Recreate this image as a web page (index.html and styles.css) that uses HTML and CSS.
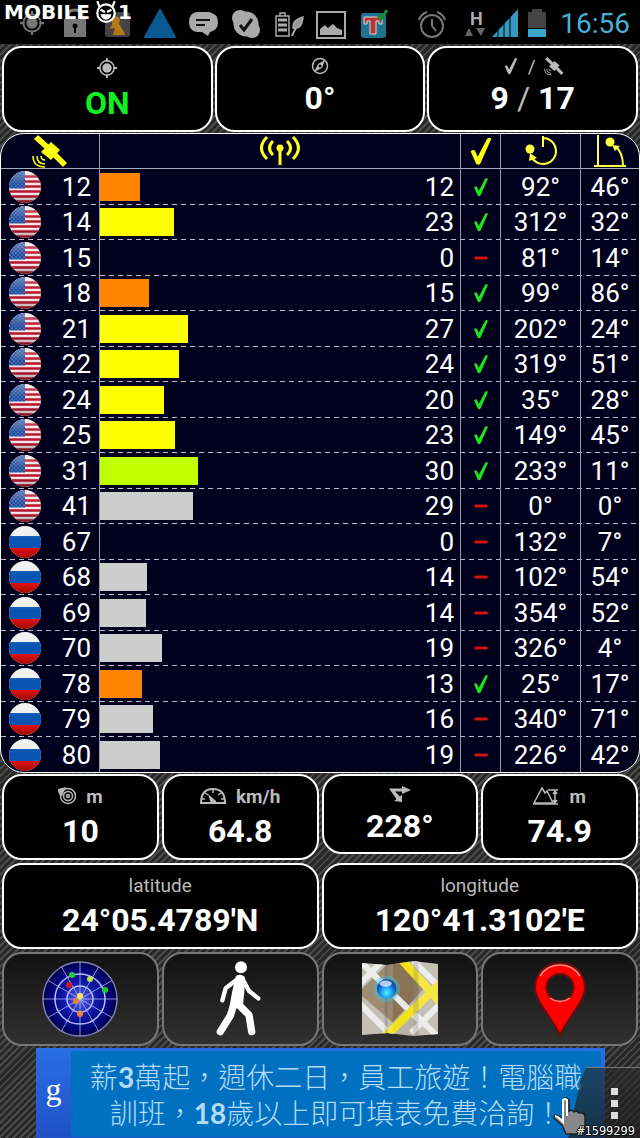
FILE: index.html
```html
<!DOCTYPE html>
<html lang="zh-Hant">
<head>
  <meta charset="UTF-8">
  <meta name="viewport" content="width=device-width, initial-scale=1.0">
  <title>GPS Status</title>
  <link rel="stylesheet" href="styles.css">
</head>
<body>

  <!-- Shared icons -->
  <svg class="defs" width="0" height="0" aria-hidden="true">
    <defs>
      <radialGradient id="radarFill">
        <stop offset="0" stop-color="#5a6cf0"/><stop offset="0.45" stop-color="#1018a8"/><stop offset="0.85" stop-color="#000070"/><stop offset="1" stop-color="#00003c"/>
      </radialGradient>
      <radialGradient id="ballFill" cx="0.5" cy="0.7">
        <stop offset="0" stop-color="#4ff0ff"/><stop offset="0.6" stop-color="#189cf0"/><stop offset="1" stop-color="#0a50b8"/>
      </radialGradient>
      <linearGradient id="shine" x1="0" y1="0" x2="0" y2="1">
        <stop offset="0" stop-color="#fff" stop-opacity="0.3"/><stop offset="0.4" stop-color="#fff" stop-opacity="0"/><stop offset="0.7" stop-color="#000" stop-opacity="0"/><stop offset="1" stop-color="#000" stop-opacity="0.3"/>
      </linearGradient>
      <clipPath id="round"><circle cx="16" cy="16" r="16"/></clipPath>
      <clipPath id="mapShape"><path d="M0 2 25 4 50 0 74 3V71L50 73 25 70 0 72z"/></clipPath>
      <pattern id="stars" width="4" height="4" patternUnits="userSpaceOnUse">
        <rect width="4" height="4" fill="#1d4a9c"/><circle cx="1" cy="1" r="0.6" fill="#cfe0f8"/><circle cx="3" cy="3" r="0.6" fill="#cfe0f8"/>
      </pattern>
    </defs>
    <symbol id="us" viewBox="0 0 32 32">
      <g clip-path="url(#round)">
        <rect width="32" height="32" fill="#f8e6e8"/>
        <path d="M0 5.500h32M0 10.500h32M0 15.500h32M0 20.500h32M0 25.500h32M0 30.500h32" stroke="#b5162c" stroke-width="2.500"/>
        <rect width="16" height="17.500" fill="url(#stars)"/>
        <rect width="32" height="32" fill="url(#shine)"/>
      </g>
    </symbol>
    <symbol id="ru" viewBox="0 0 32 32">
      <g clip-path="url(#round)">
        <rect width="32" height="32" fill="#eee"/>
        <rect y="10" width="32" height="12" fill="#0a55b4"/>
        <rect y="22" width="32" height="10" fill="#e0100c"/>
        <rect width="32" height="32" fill="url(#shine)"/>
      </g>
    </symbol>
    <symbol id="tick" viewBox="0 0 24 32">
      <path d="M1 16.500Q3 14 5.500 15.500L8.500 22 18.500 3Q21 .5 23 3L11.500 29Q9 32.500 6.500 29z" fill="currentColor"/>
    </symbol>
    <symbol id="minus" viewBox="0 0 24 32"><path d="M3.500 16h17" stroke="#d01414" stroke-width="5" stroke-linecap="round"/></symbol>
    <symbol id="satellite" viewBox="0 0 36 34">
      <g fill="currentColor">
        <path d="M6 1 17 11 13 15 2 5z"/><path d="M19 8 28 16 19 26 9 18z"/><path d="M25 19 35 29 31 33 21 23z"/>
      </g>
      <path d="M9 22q0 4 4 4M5 22q0 8 8 8M1 22q0 11 12 11" fill="none" stroke="currentColor" stroke-width="1.500"/>
    </symbol>
    <symbol id="target" viewBox="0 0 32 32">
      <circle cx="16" cy="16" r="7.500" fill="currentColor"/>
      <circle cx="16" cy="16" r="11.500" fill="none" stroke="currentColor" stroke-width="2.400"/>
      <path d="M16 0v6M16 26v6M0 16h6M26 16h6" stroke="currentColor" stroke-width="3"/>
    </symbol>
  </svg>

  <header class="status-bar">
    <div class="notifications">
      <svg viewBox="0 0 32 32"><g color="#777" transform="translate(4 4) scale(.75)"><use href="#target" width="32" height="32"/></g></svg>
      <svg viewBox="0 0 32 32" fill="#777"><path d="M5 12h22v18H5z"/><path d="M9 12V8q0-5 7-5t7 5v4" fill="none" stroke="#777" stroke-width="3"/><circle cx="16" cy="19" r="2.500" fill="#000"/><path d="M15 20h2v6h-2z" fill="#000"/></svg>
      <svg viewBox="0 0 32 32"><rect x="3" y="5" width="25" height="25" rx="3" fill="#444"/><path d="M10 10q5-3 8 2l-1 5 5 8 1 3H11l2-7-5 1 2-4z" fill="#b57a18"/></svg>
      <svg viewBox="0 0 32 32"><path d="M16 3 31 30H1z" fill="#0a5a92" stroke="#0a5a92" stroke-width="2" stroke-linejoin="round"/></svg>
      <svg viewBox="0 0 32 32"><path d="M10 5h12q9 2 9 10t-8 10l-2 4-6-4h-5q-8-1-8-10T10 5z" fill="#aaa"/><path d="M9 13h14M9 18h9" stroke="#111" stroke-width="2"/></svg>
      <svg viewBox="0 0 32 32"><circle cx="16" cy="17" r="12.500" fill="#aaa"/><circle cx="10" cy="11" r="8" fill="#aaa"/><circle cx="22" cy="23" r="8" fill="#aaa"/><path d="M10 18l4 5 8-11" fill="none" stroke="#111" stroke-width="3"/></svg>
      <svg viewBox="0 0 32 32" fill="none" stroke="#aaa" stroke-width="1.500"><path d="M3 9h13v20H3zM7 6h5v3H7z"/><path d="M5 13h9M5 18h9M5 23h9" stroke-width="3"/><path d="M19 29q2-5 4-8" stroke-width="2"/><path d="M20 21q-1-8 10-11-1 13-10 11z" fill="#999"/></svg>
      <svg viewBox="0 0 32 32"><path d="M2 5h28v26H2z" fill="none" stroke="#aaa" stroke-width="2"/><path d="M5 28v-6l5-4 3 3 5-4 4 4 5 2v5z" fill="#aaa"/></svg>
      <svg viewBox="0 0 32 32"><rect x="3" y="6" width="25" height="25" rx="3" fill="#1f7290"/><path d="M6 10h18v7h-3v-3h-3v13h-6V14H9v3H6z" fill="#b33" stroke="#ddd"/><path d="M20 8l3 4 6-9" fill="none" stroke="#1a8a2a" stroke-width="3"/></svg>
    </div>
    <svg class="alarm" viewBox="0 0 32 32" fill="none" stroke="#777" stroke-width="2"><circle cx="16" cy="19" r="11"/><path d="M16 12v7l4 5M3 13q2-6 8-8M29 13q-2-6-8-8"/></svg>
    <div class="network"><b>H</b><svg viewBox="0 0 22 9" fill="#666"><path d="M1 8 5 0 9 8zM12 0h9l-4 8z"/></svg></div>
    <svg class="signal" viewBox="0 0 26 28"><path d="M0 28 26 0v28z" fill="#359ac0"/><path d="M6 18v10M12 10v18M18 4v24" stroke="#000"/></svg>
    <svg class="battery" viewBox="0 0 18 28"><path d="M0 3h4V0h10v3h4v16H0z" fill="#444"/><path d="M0 20h18v8H0z" fill="#38a5cc"/></svg>
    <time class="clock">16:56</time>
    <div class="watermark">MOBILE<svg viewBox="0 0 20 22"><circle cx="10" cy="12" r="8" fill="#000" stroke="#fff" stroke-width="2"/><path d="M2 1l2 5M18 1l-2 5M5 9l4 2M15 9l-4 2" stroke="#fff" stroke-width="2"/><path d="M5 13h10q-1 5-5 5t-5-5z" fill="#fff"/></svg>1</div>
  </header>

  <main>
    <section class="row top">
      <div class="card">
        <div class="label"><svg class="ic20"><use href="#target"/></svg></div>
        <div class="value on">ON</div>
      </div>
      <div class="card compact">
        <div class="label"><svg class="ic18" viewBox="0 0 18 18"><circle cx="9" cy="9" r="7.500" fill="none" stroke="#bbb" stroke-width="1.500"/><path d="M14 3 11 11 3 15 7 7z" fill="#bbb"/><circle cx="9" cy="9" r="1.500" fill="#000"/></svg></div>
        <div class="value">0°</div>
      </div>
      <div class="card compact">
        <div class="label icons"><svg class="ic18"><use href="#tick"/></svg><span class="slash">/</span><svg class="ic20"><use href="#satellite"/></svg></div>
        <div class="value">9 <span class="slash">/</span> 17</div>
      </div>
    </section>

    <section class="panel">
      <table class="sats">
        <thead>
          <tr>
            <th class="id" aria-label="Satellite"><svg class="h-sat"><use href="#satellite"/></svg></th>
            <th aria-label="Signal"><svg class="h-signal" viewBox="0 0 42 30" fill="none" stroke="#ff2" stroke-width="3"><circle cx="21" cy="12" r="3.500" fill="#ff2" stroke="none"/><path d="M21 15v14M14 5q-7 7 0 14M28 5q7 7 0 14M8 1q-11 11 0 22M34 1q11 11 0 22"/></svg></th>
            <th class="used" aria-label="Used"><svg class="h-tick"><use href="#tick"/></svg></th>
            <th class="az" aria-label="Azimuth"><svg class="h-az" viewBox="0 0 34 32" fill="none" stroke="#ff4" stroke-width="2"><path d="M19 1v11M19 3A13 13 0 1 1 7 21"/><circle cx="6" cy="14" r="4.500" fill="#ff4" stroke="none"/><path d="M5 26l1-8 7 5z" fill="#ff4" stroke="none"/></svg></th>
            <th class="el" aria-label="Elevation"><svg class="h-el" viewBox="0 0 34 32" fill="none" stroke="#ff4" stroke-width="2"><path d="M5 0v31M1 31h32M30 31Q30 17 22 11"/><circle cx="17" cy="7" r="4.500" fill="#ff4" stroke="none"/><path d="M19 10l8 1-5 5z" fill="#ff4" stroke="none"/></svg></th>
          </tr>
        </thead>
        <tbody>
          <tr><td><div class="sat"><svg><use href="#us"/></svg>12</div></td><td><div class="snr"><i class="bar orange" style="width: 11.3%"></i>12</div></td><td><svg class="mark"><use href="#tick"/></svg></td><td>92°</td><td>46°</td></tr>
          <tr><td><div class="sat"><svg><use href="#us"/></svg>14</div></td><td><div class="snr"><i class="bar yellow" style="width: 20.9%"></i>23</div></td><td><svg class="mark"><use href="#tick"/></svg></td><td>312°</td><td>32°</td></tr>
          <tr><td><div class="sat"><svg><use href="#us"/></svg>15</div></td><td><div class="snr"><i class="bar" style="width: 0%"></i>0</div></td><td><svg class="mark"><use href="#minus"/></svg></td><td>81°</td><td>14°</td></tr>
          <tr><td><div class="sat"><svg><use href="#us"/></svg>18</div></td><td><div class="snr"><i class="bar orange" style="width: 13.8%"></i>15</div></td><td><svg class="mark"><use href="#tick"/></svg></td><td>99°</td><td>86°</td></tr>
          <tr><td><div class="sat"><svg><use href="#us"/></svg>21</div></td><td><div class="snr"><i class="bar yellow" style="width: 24.9%"></i>27</div></td><td><svg class="mark"><use href="#tick"/></svg></td><td>202°</td><td>24°</td></tr>
          <tr><td><div class="sat"><svg><use href="#us"/></svg>22</div></td><td><div class="snr"><i class="bar yellow" style="width: 22.3%"></i>24</div></td><td><svg class="mark"><use href="#tick"/></svg></td><td>319°</td><td>51°</td></tr>
          <tr><td><div class="sat"><svg><use href="#us"/></svg>24</div></td><td><div class="snr"><i class="bar yellow" style="width: 18.1%"></i>20</div></td><td><svg class="mark"><use href="#tick"/></svg></td><td>35°</td><td>28°</td></tr>
          <tr><td><div class="sat"><svg><use href="#us"/></svg>25</div></td><td><div class="snr"><i class="bar yellow" style="width: 21.2%"></i>23</div></td><td><svg class="mark"><use href="#tick"/></svg></td><td>149°</td><td>45°</td></tr>
          <tr><td><div class="sat"><svg><use href="#us"/></svg>31</div></td><td><div class="snr"><i class="bar green" style="width: 27.8%"></i>30</div></td><td><svg class="mark"><use href="#tick"/></svg></td><td>233°</td><td>11°</td></tr>
          <tr><td><div class="sat"><svg><use href="#us"/></svg>41</div></td><td><div class="snr"><i class="bar gray" style="width: 26.4%"></i>29</div></td><td><svg class="mark"><use href="#minus"/></svg></td><td>0°</td><td>0°</td></tr>
          <tr><td><div class="sat"><svg><use href="#ru"/></svg>67</div></td><td><div class="snr"><i class="bar" style="width: 0%"></i>0</div></td><td><svg class="mark"><use href="#minus"/></svg></td><td>132°</td><td>7°</td></tr>
          <tr><td><div class="sat"><svg><use href="#ru"/></svg>68</div></td><td><div class="snr"><i class="bar gray" style="width: 13.3%"></i>14</div></td><td><svg class="mark"><use href="#minus"/></svg></td><td>102°</td><td>54°</td></tr>
          <tr><td><div class="sat"><svg><use href="#ru"/></svg>69</div></td><td><div class="snr"><i class="bar gray" style="width: 13%"></i>14</div></td><td><svg class="mark"><use href="#minus"/></svg></td><td>354°</td><td>52°</td></tr>
          <tr><td><div class="sat"><svg><use href="#ru"/></svg>70</div></td><td><div class="snr"><i class="bar gray" style="width: 17.5%"></i>19</div></td><td><svg class="mark"><use href="#minus"/></svg></td><td>326°</td><td>4°</td></tr>
          <tr><td><div class="sat"><svg><use href="#ru"/></svg>78</div></td><td><div class="snr"><i class="bar orange" style="width: 12%"></i>13</div></td><td><svg class="mark"><use href="#tick"/></svg></td><td>25°</td><td>17°</td></tr>
          <tr><td><div class="sat"><svg><use href="#ru"/></svg>79</div></td><td><div class="snr"><i class="bar gray" style="width: 15%"></i>16</div></td><td><svg class="mark"><use href="#minus"/></svg></td><td>340°</td><td>71°</td></tr>
          <tr><td><div class="sat"><svg><use href="#ru"/></svg>80</div></td><td><div class="snr"><i class="bar gray" style="width: 17%"></i>19</div></td><td><svg class="mark"><use href="#minus"/></svg></td><td>226°</td><td>42°</td></tr>
        </tbody>
      </table>
    </section>

    <section class="row">
      <div class="card">
        <div class="label"><svg class="ic18" viewBox="0 0 18 18" fill="none" stroke="#bbb" stroke-width="1.500"><circle cx="10" cy="9" r="7.500"/><circle cx="10" cy="9" r="4.500"/><circle cx="10" cy="9" r="1.500"/><path d="M0 2 8 0 4 9Q0 8 0 2z" fill="#bbb" stroke="none"/></svg>m</div>
        <div class="value">10</div>
      </div>
      <div class="card">
        <div class="label"><svg class="ic26" viewBox="0 0 26 18" fill="none" stroke="#bbb" stroke-width="2"><path d="M1 16Q1 2 13 2t12 14z"/><path d="M13 2v4M5 6l3 2M21 6l-3 2M2 12h3M24 12h-3" stroke-width="1.500"/><path d="M8 7l8 7v3h-5z" fill="#bbb" stroke="none"/></svg>km/h</div>
        <div class="value">64.8</div>
      </div>
      <div class="card compact">
        <div class="label"><svg class="ic22" viewBox="0 0 22 16"><path d="M0 2.500h13V0l9 4-9 4V5.500H6l5 5 2-2V16l-8-1 2.500-2z" fill="#bbb"/></svg></div>
        <div class="value">228°</div>
      </div>
      <div class="card">
        <div class="label"><svg class="ic26" viewBox="0 0 26 18" fill="none" stroke="#bbb" stroke-width="1.500"><path d="M1 16 9 1 12 6 14 4 20 16z"/><path d="M0 17h25M15 3h10M22 4v12M20 7l2-3 2 3M20 13l2 3 2-3"/></svg>m</div>
        <div class="value">74.9</div>
      </div>
    </section>

    <section class="row">
      <div class="card">
        <div class="label name">latitude</div>
        <div class="value">24°05.4789'N</div>
      </div>
      <div class="card">
        <div class="label name">longitude</div>
        <div class="value">120°41.3102'E</div>
      </div>
    </section>

    <nav class="row buttons">
      <button type="button" aria-label="Radar">
        <svg viewBox="0 0 76 76" fill="none" stroke="#b8bcf4">
          <circle cx="38" cy="38" r="37" fill="url(#radarFill)" stroke="#777db8" stroke-width="1.500"/>
          <path d="M38 1v74M1 38h74M19.500 6l37 64M56.500 6l-37 64M6 19.500l64 37M6 56.500l64-37" stroke-opacity=".75"/>
          <circle cx="38" cy="38" r="25" stroke-width="1.500"/><circle cx="38" cy="38" r="13" stroke-width="1.500"/>
          <g stroke="none"><circle cx="30" cy="14" r="3" fill="#1bd030"/><circle cx="48" cy="18" r="3" fill="#b4e84a"/><circle cx="63" cy="29" r="3" fill="#1bd030"/><circle cx="27" cy="24" r="3" fill="#d01430"/><circle cx="34" cy="40" r="3" fill="#e88038"/><circle cx="38" cy="35" r="3" fill="#ffe850"/><circle cx="38" cy="53" r="3" fill="#e88038"/></g>
        </svg>
      </button>
      <button type="button" aria-label="Walk">
        <svg viewBox="0 0 150 228" fill="none" stroke="#fff" stroke-linecap="round" stroke-linejoin="round">
          <circle cx="78" cy="19" r="18" fill="#fff" stroke="none"/>
          <path d="M66 48Q76 42 86 50L84 92 80 132 48 134 56 90z" fill="#fff" stroke-width="8"/>
          <path d="M68 54 32 82 22 118M84 56 102 90 130 112" stroke-width="13"/>
          <path d="M56 132 46 164 16 212M70 130 102 162 110 212" stroke-width="22"/>
        </svg>
      </button>
      <button type="button" aria-label="Map">
        <svg viewBox="0 0 74 74">
          <g clip-path="url(#mapShape)">
            <rect width="74" height="74" fill="#b9b3a6"/>
            <path d="M0 27 26 2H40L60 27 30 60 0 34z" fill="#8a7355"/>
            <path d="M-2 0 22 24M32 34 60 62M-4 24 22-2M-4 40 30 74M48 70 76 42M52 52 76 76M50 0 74 24" stroke="#e8e8e8" stroke-width="6"/>
            <path d="M36-4 78 42M20 76 76 22" stroke="#f2e21c" stroke-width="8"/>
            <path d="M25 0v74H0V0zM74 0v74H50V0z" fill="#fff" fill-opacity=".18"/>
            <path d="M22 0h3v74h-3zM50 0h5v74h-5z" fill="#000" fill-opacity=".13"/>
            <path d="M25 0h5v74h-5z" fill="#fff" fill-opacity=".15"/>
          </g>
          <circle cx="24" cy="27" r="13" fill="#30c8f0" fill-opacity=".35"/>
          <circle cx="24" cy="27" r="9.500" fill="url(#ballFill)"/><ellipse cx="23" cy="22" rx="6" ry="3" fill="#fff" fill-opacity=".7"/>
        </svg>
      </button>
      <button type="button" aria-label="Location">
        <svg viewBox="0 0 54 76"><path d="M27 2C12 2 2 13 2 27c0 13 16 28 25 47 9-19 25-34 25-47C52 13 42 2 27 2zM27 13a13 13 0 1 1 0 27 13 13 0 1 1 0-27z" fill="#f00" fill-rule="evenodd" stroke="#6a0d0d" stroke-width="2"/><path d="M7 15Q14 4 27 4t20 11M17 37q10 7 20 0" fill="none" stroke="#ff8a80" stroke-width="1.500"/></svg>
      </button>
    </nav>
  </main>

  <footer>
    <a class="ad" href="#">
      <span class="g">g</span>
      <span class="ad-text">薪<b>3</b>萬起，週休二日，員工旅遊！電腦職<br>訓班，<b>18</b>歲以上即可填表免費洽詢！</span>
    </a>
    <button class="menu" type="button" aria-label="Menu"><i></i><i></i><i></i></button>
    <svg class="hand" viewBox="0 0 36 38"><path d="M14 37 10 28 2 21Q2 17 7 19l4 3V3q3-4 6 0v11q3-2 5 1 3-2 5 1 5-1 6 3v9l-3 9z" fill="#888" stroke="#222" stroke-width="1.500"/><path d="M3 19q3 0 8 6V3q2-2 4 0v16" fill="none" stroke="#fff" stroke-width="2"/></svg>
    <span class="photo-id">#1599299</span>
  </footer>

</body>
</html>
```
FILE: styles.css
```css
* {
  box-sizing: border-box;
}
body {
  margin: 0;
  min-height: 100vh;
  display: flex;
  flex-direction: column;
  font-family: Roboto, sans-serif;
  color: #fff;
  background: repeating-linear-gradient(135deg, #282828 0 3px, #4a4a4a 3px 5px);
}
.defs {
  position: absolute;
}

/* status bar */
.status-bar {
  position: relative;
  display: flex;
  align-items: center;
  height: 44px;
  padding: 2px 10px 0 16px;
  background: #000;
}
.notifications {
  flex: 1;
  display: flex;
  justify-content: space-between;
  margin-right: 26px;
}
.notifications svg,
.alarm {
  width: 32px;
  height: 32px;
}
.network {
  width: 24px;
  margin-left: 16px;
  text-align: center;
  font-size: 18px;
  line-height: 18px;
  color: #aaa;
}
.network svg {
  display: block;
  width: 22px;
  height: 9px;
}
.signal {
  width: 26px;
  height: 28px;
  margin-left: 4px;
}
.battery {
  width: 18px;
  height: 28px;
  margin: 0 14px 0 10px;
}
.clock {
  font-size: 28px;
  color: #48aed4;
}
.watermark {
  position: absolute;
  left: 4px;
  top: 0;
  display: flex;
  align-items: center;
  height: 24px;
  font: bold 20px "DejaVu Sans", sans-serif;
}
.watermark svg {
  width: 24px;
  height: 24px;
  margin-left: 4px;
}

/* cards */
main {
  display: flex;
  flex-direction: column;
  gap: 3px;
}
.row {
  display: flex;
  align-items: flex-start;
  gap: 3px;
  padding: 0 2px;
}
.top {
  padding-top: 2px;
  margin-bottom: -2px;
  gap: 2px;
  align-items: stretch;
}
.card {
  flex: 1;
  padding: 8px 0 4px;
  border: 2px solid #fff;
  border-radius: 20px;
  background: #000;
  text-align: center;
}
.label {
  display: flex;
  align-items: center;
  justify-content: center;
  gap: 10px;
  height: 24px;
  font-size: 19px;
  font-weight: bold;
  color: #bbb;
}
.icons {
  gap: 8px;
}
.name {
  font-weight: normal;
}
.value {
  font-size: 32px;
  line-height: 46px;
  font-weight: bold;
}
.compact .label {
  height: 20px;
}
.compact .value {
  line-height: 44px;
}
.on {
  color: #10f020;
}
.slash {
  font-weight: normal;
  color: #bbb;
}
.ic18 {
  width: 18px;
  height: 18px;
}
.ic20 {
  width: 20px;
  height: 20px;
}
.ic22 {
  width: 22px;
  height: 16px;
}
.ic26 {
  width: 26px;
  height: 18px;
}

/* satellite table */
.panel {
  margin-bottom: -2px;
  border: 1px solid #fff;
  border-radius: 24px;
  background: #00001c;
  overflow: hidden;
}
.sats {
  width: 100%;
  height: 638px;
  table-layout: fixed;
  border-collapse: separate;
  border-spacing: 0;
  font-size: 26px;
  line-height: 32px;
  text-align: center;
}
.sats th,
.sats td {
  height: 35px;
  padding: 0;
}
.sats tr:last-child td {
  height: 34px;
}
.sats th {
  border-bottom: 1px solid #aab;
  line-height: 0;
  color: #ff1;
}
.sats th + th,
.sats td + td {
  border-left: 1px solid #9a9aae;
}
.sats tbody tr:not(:last-child) {
  background: repeating-linear-gradient(90deg, #bbc 0 5px, transparent 5px 9px) left bottom / 100% 1px no-repeat;
}
.id {
  width: 98px;
}
.used {
  width: 40px;
}
.az {
  width: 80px;
}
.el {
  width: 59px;
}
.sat {
  display: flex;
  align-items: center;
  justify-content: space-between;
  padding: 0 8px;
}
.sat svg {
  width: 32px;
  height: 32px;
}
.snr {
  display: flex;
  align-items: center;
  justify-content: space-between;
  padding-right: 6px;
}
.bar {
  height: 28px;
}
.orange {
  background: #ff8400;
}
.yellow {
  background: #ff0;
}
.green {
  background: #bfff00;
}
.gray {
  background: #cdcdcd;
}
.mark {
  display: block;
  width: 20px;
  height: 20px;
  margin: 0 auto;
  color: #1ce41c;
}
.h-sat {
  width: 36px;
  height: 34px;
}
.h-signal {
  width: 42px;
  height: 30px;
}
.h-tick {
  width: 24px;
  height: 30px;
}
.h-az,
.h-el {
  width: 34px;
  height: 32px;
}

/* bottom buttons */
.buttons button {
  flex: 1;
  height: 94px;
  padding: 0;
  border: 2px solid #777;
  border-radius: 20px;
  background: linear-gradient(#121212, #303030);
}
.buttons svg {
  display: block;
  height: 76px;
  margin: 0 auto;
}

/* ad strip */
footer {
  position: relative;
  flex: 1;
  display: flex;
  margin-top: 2px;
  padding: 0 35px 0 36px;
}
.ad {
  flex: 1;
  display: flex;
  align-items: center;
  padding: 3px 4px 2px 0;
  background: linear-gradient(#2a6ee4, #2050c8);
  color: #b4dcf8;
  text-decoration: none;
}
.g {
  width: 35px;
  padding-bottom: 10px;
  text-align: center;
  font: 32px "Liberation Serif", serif;
  color: #fff;
}
.ad-text {
  flex: 1;
  align-self: stretch;
  padding: 9px 0 5px;
  border-radius: 3px;
  background: #0070c0;
  font: 300 28px/34px Roboto, "Noto Sans CJK TC", sans-serif;
  text-align: center;
  white-space: nowrap;
}
.ad-text b {
  font-family: Lato, sans-serif;
  font-weight: bold;
}
.menu {
  position: absolute;
  right: 0;
  bottom: 0;
  width: 72px;
  height: 72px;
  display: flex;
  flex-direction: column;
  align-items: center;
  justify-content: center;
  gap: 5px;
  padding: 0 0 0 20px;
  border: 0;
  border-top: 1px solid #777;
  background: linear-gradient(rgba(40, 40, 40, 0.6), rgba(30, 30, 30, 0.75));
  clip-path: polygon(25% 0, 100% 0, 100% 100%, 0 100%, 17% 20%);
}
.menu i {
  width: 7px;
  height: 7px;
  background: #ddd;
}
.hand {
  position: absolute;
  right: 52px;
  bottom: 4px;
  width: 36px;
  height: 38px;
}
.photo-id {
  position: absolute;
  right: 5px;
  bottom: 0;
  font: 12px/16px "DejaVu Sans Mono", monospace;
  text-shadow: 1px 0 #000, -1px 0 #000, 0 1px #000, 0 -1px #000;
}
```
